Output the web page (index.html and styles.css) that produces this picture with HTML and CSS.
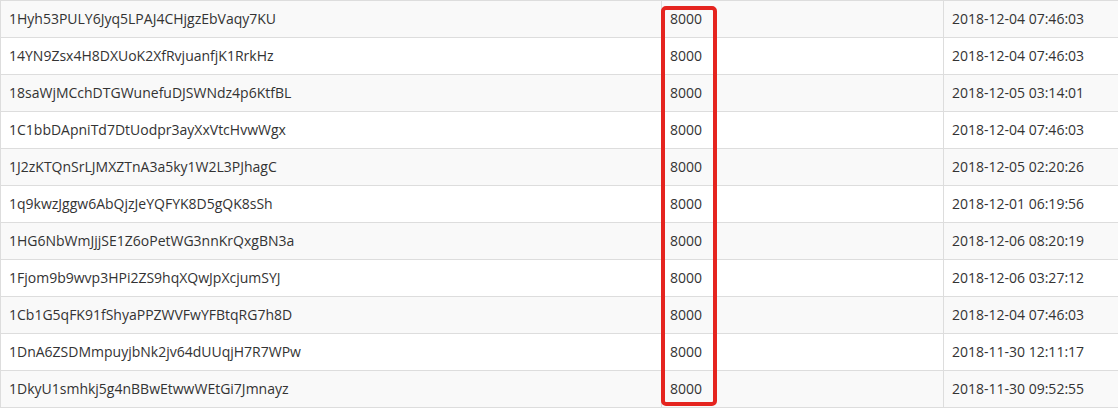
FILE: index.html
```html
<!DOCTYPE html>
<html>
<head>
<meta charset="utf-8">
<link rel="stylesheet" href="styles.css">
</head>
<body>
<div class="wrap">
  <table class="tbl">
    <colgroup>
      <col class="c-addr">
      <col class="c-amt">
      <col class="c-date">
    </colgroup>
    <tbody>
      <tr><td>1Hyh53PULY6Jyq5LPAJ4CHjgzEbVaqy7KU</td><td>8000</td><td>2018-12-04 07:46:03</td></tr>
      <tr><td>14YN9Zsx4H8DXUoK2XfRvjuanfjK1RrkHz</td><td>8000</td><td>2018-12-04 07:46:03</td></tr>
      <tr><td>18saWjMCchDTGWunefuDJSWNdz4p6KtfBL</td><td>8000</td><td>2018-12-05 03:14:01</td></tr>
      <tr><td>1C1bbDApniTd7DtUodpr3ayXxVtcHvwWgx</td><td>8000</td><td>2018-12-04 07:46:03</td></tr>
      <tr><td>1J2zKTQnSrLJMXZTnA3a5ky1W2L3PJhagC</td><td>8000</td><td>2018-12-05 02:20:26</td></tr>
      <tr><td>1q9kwzJggw6AbQjzJeYQFYK8D5gQK8sSh</td><td>8000</td><td>2018-12-01 06:19:56</td></tr>
      <tr><td>1HG6NbWmJjjSE1Z6oPetWG3nnKrQxgBN3a</td><td>8000</td><td>2018-12-06 08:20:19</td></tr>
      <tr><td>1Fjom9b9wvp3HPi2ZS9hqXQwJpXcjumSYJ</td><td>8000</td><td>2018-12-06 03:27:12</td></tr>
      <tr><td>1Cb1G5qFK91fShyaPPZWVFwYFBtqRG7h8D</td><td>8000</td><td>2018-12-04 07:46:03</td></tr>
      <tr><td>1DnA6ZSDMmpuyjbNk2jv64dUUqjH7R7WPw</td><td>8000</td><td>2018-11-30 12:11:17</td></tr>
      <tr><td>1DkyU1smhkj5g4nBBwEtwwWEtGi7Jmnayz</td><td>8000</td><td>2018-11-30 09:52:55</td></tr>
    </tbody>
  </table>
  <div class="highlight"></div>
</div>
</body>
</html>
```
FILE: styles.css
```css
html, body {
  margin: 0;
  padding: 0;
  background: #fff;
}
body {
  font-family: "Open Sans", "Liberation Sans", sans-serif;
  font-size: 14px;
  line-height: 20px;
  color: #333;
}
.wrap {
  position: relative;
  width: 1118px;
}
.tbl {
  width: 1118px;
  border-collapse: collapse;
  table-layout: fixed;
}
.c-addr { width: 661px; }
.c-amt { width: 282px; }
.c-date { width: 175px; }
.tbl td {
  padding: 8px 8px 8px 8px;
  border: 1px solid #ddd;
  white-space: nowrap;
  overflow: hidden;
  height: 20px;
}
.tbl tr:nth-child(odd) td {
  background: #f9f9f9;
}
.highlight {
  position: absolute;
  left: 661px;
  top: 6px;
  width: 48px;
  height: 392px;
  border: 4px solid #e5241f;
  border-radius: 5px;
}
```
